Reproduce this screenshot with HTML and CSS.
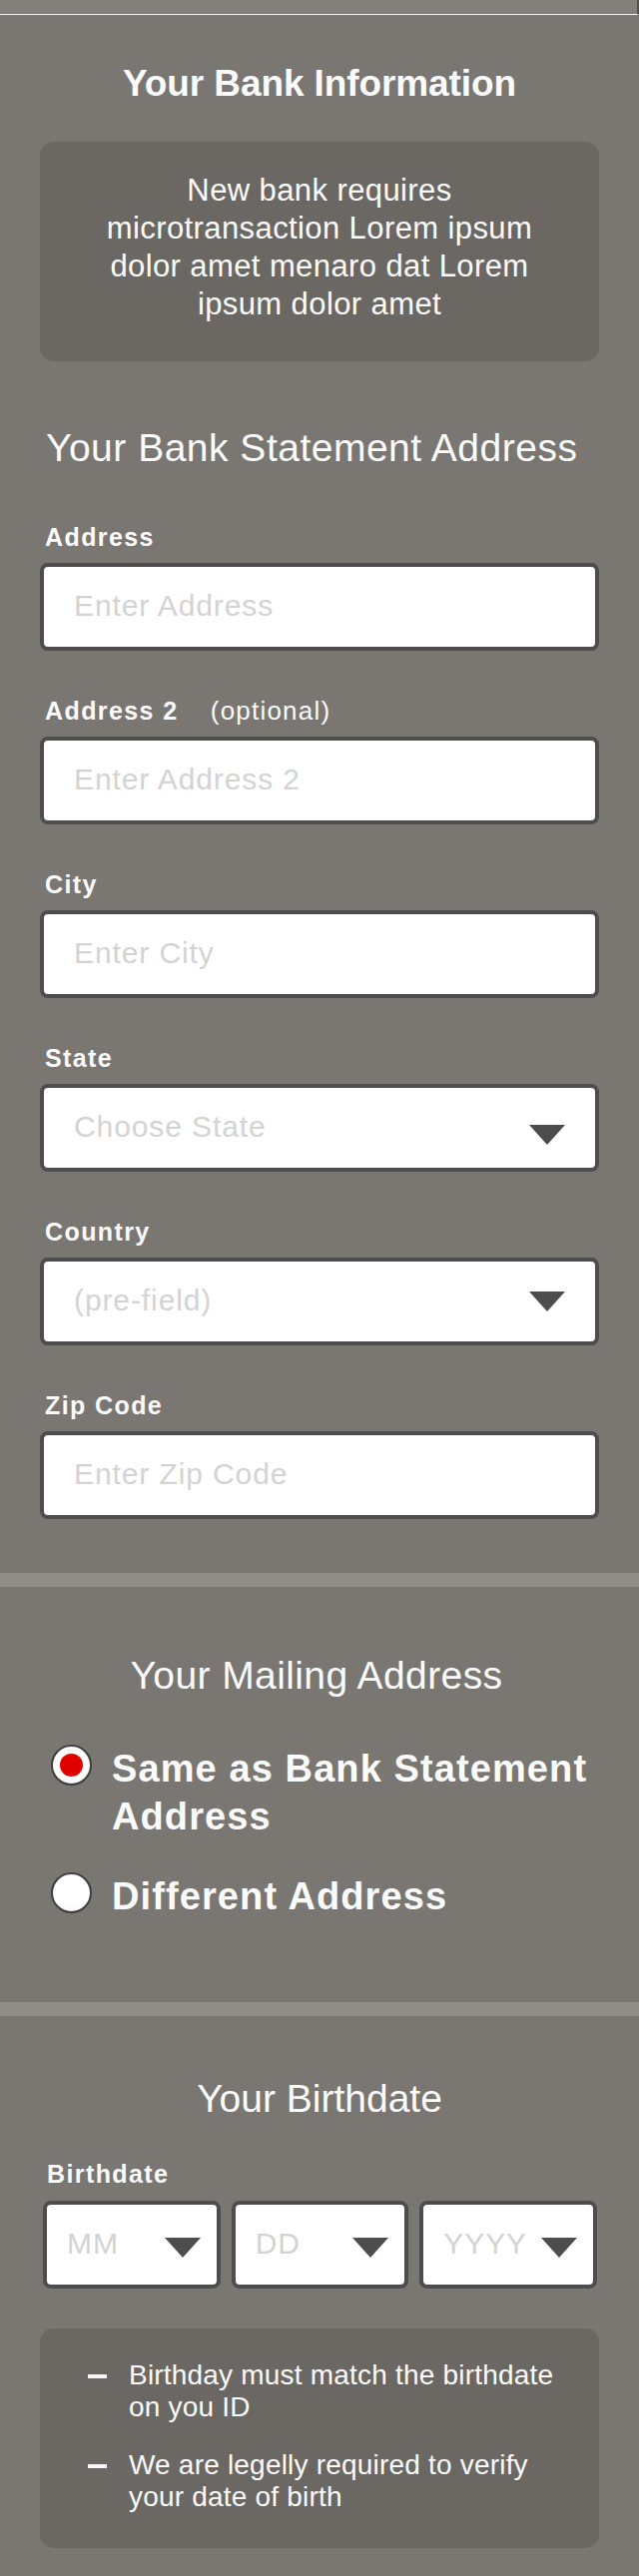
FILE: index.html
```html
<!DOCTYPE html>
<html lang="en">
<head>
<meta charset="utf-8">
<title>Your Bank Information</title>
<link rel="stylesheet" href="styles.css">
</head>
<body>
<div class="topbar"></div>

<section class="sec sec-bank">
  <h1 class="title-bold">Your Bank Information</h1>
  <div class="note">New bank requires microtransaction Lorem ipsum dolor amet menaro dat Lorem ipsum dolor amet</div>

  <h2 class="title title-statement">Your Bank Statement Address</h2>

  <div class="fields">
    <div class="field">
      <div class="label">Address</div>
      <div class="input"><span class="ph">Enter Address</span></div>
    </div>
    <div class="field">
      <div class="label">Address 2 <span class="opt">(optional)</span></div>
      <div class="input"><span class="ph">Enter Address 2</span></div>
    </div>
    <div class="field">
      <div class="label">City</div>
      <div class="input"><span class="ph">Enter City</span></div>
    </div>
    <div class="field">
      <div class="label">State</div>
      <div class="input select"><span class="ph">Choose State</span><span class="arrow arrow-low"></span></div>
    </div>
    <div class="field">
      <div class="label">Country</div>
      <div class="input select"><span class="ph">(pre-field)</span><span class="arrow"></span></div>
    </div>
    <div class="field">
      <div class="label">Zip Code</div>
      <div class="input"><span class="ph">Enter Zip Code</span></div>
    </div>
  </div>
</section>

<div class="divider"></div>

<section class="sec sec-mail">
  <h2 class="title title-mail">Your Mailing Address</h2>
  <div class="radios">
    <div class="radio-item">
      <span class="radio checked"></span>
      <span class="radio-text">Same as Bank Statement Address</span>
    </div>
    <div class="radio-item">
      <span class="radio"></span>
      <span class="radio-text">Different Address</span>
    </div>
  </div>
</section>

<div class="divider"></div>

<section class="sec sec-birth">
  <h2 class="title">Your Birthdate</h2>
  <div class="label label-birth">Birthdate</div>
  <div class="date-row">
    <div class="input select small"><span class="ph">MM</span><span class="arrow"></span></div>
    <div class="input select small"><span class="ph">DD</span><span class="arrow"></span></div>
    <div class="input select small"><span class="ph">YYYY</span><span class="arrow"></span></div>
  </div>
  <ul class="notes">
    <li><span class="dash"></span><span class="note-text">Birthday must match the birthdate on you ID</span></li>
    <li><span class="dash"></span><span class="note-text">We are legelly required to verify your date of birth</span></li>
  </ul>
</section>
</body>
</html>
```

FILE: styles.css
```css
* {
  box-sizing: border-box;
}

html, body {
  margin: 0;
  padding: 0;
}

body {
  background: #7a7773;
  font-family: "Liberation Sans", Arial, Helvetica, sans-serif;
  color: #fbfbfb;
  width: 640px;
}

.topbar {
  height: 15px;
  background: #837f7b;
  border-bottom: 1px solid #f4f4f4;
  border-right: 2px solid #505050;
}

.sec {
  padding: 0 40px;
}

.sec-bank {
  padding-bottom: 54px;
}

.title-bold {
  margin: 47px 0 0;
  font-size: 37px;
  line-height: 44px;
  font-weight: bold;
  text-align: center;
  letter-spacing: -0.1px;
}

.note {
  margin-top: 36px;
  background: #6b6864;
  border-radius: 14px;
  padding: 30px 40px 38px;
  font-size: 31px;
  line-height: 38px;
  letter-spacing: 0.4px;
  text-align: center;
}

.title {
  margin: 0;
  font-size: 39px;
  line-height: 46px;
  font-weight: normal;
  text-align: center;
}

.title-statement {
  margin-top: 64px;
  text-align: left;
  padding-left: 6px;
  letter-spacing: 0.5px;
  white-space: nowrap;
}

.title-mail {
  letter-spacing: 0.4px;
  padding-right: 6px;
}

.fields {
  margin-top: 51px;
  display: flex;
  flex-direction: column;
  gap: 45px;
}

.label {
  font-size: 25px;
  line-height: 30px;
  font-weight: bold;
  letter-spacing: 1.4px;
  padding-left: 5px;
}

.opt {
  font-weight: normal;
  font-size: 26px;
  letter-spacing: 1.2px;
  margin-left: 24px;
}

.input {
  margin-top: 11px;
  height: 88px;
  background: #ffffff;
  border: 4px solid #4d4d4d;
  border-radius: 8px;
  display: flex;
  align-items: center;
  padding: 0 30px;
}

.ph {
  color: #d3d3d3;
  font-size: 30px;
  line-height: 1;
  letter-spacing: 0.9px;
  padding-bottom: 2px;
  white-space: nowrap;
}

.select {
  justify-content: space-between;
}

.arrow {
  width: 0;
  height: 0;
  border-left: 18px solid transparent;
  border-right: 18px solid transparent;
  border-top: 20px solid #4d4d4d;
  flex: none;
}

.arrow-low {
  margin-top: 14px;
}

.divider {
  height: 14px;
  background: #918d89;
}

.sec-mail {
  padding-top: 66px;
  padding-bottom: 82px;
}

.radios {
  margin-top: 46px;
  display: flex;
  flex-direction: column;
  gap: 32px;
}

.radio-item {
  display: flex;
  align-items: flex-start;
  gap: 20px;
  padding-left: 11px;
}

.radio {
  flex: none;
  width: 41px;
  height: 41px;
  border-radius: 50%;
  border: 2px solid #3e3e3e;
  background: radial-gradient(circle at 50% 40%, #ffffff 60%, #e9e9e9 100%);
  display: flex;
  align-items: center;
  justify-content: center;
}

.radio.checked::after {
  content: "";
  width: 23px;
  height: 23px;
  border-radius: 50%;
  background: #e00000;
}

.radio-text {
  font-size: 38px;
  line-height: 48px;
  font-weight: bold;
  letter-spacing: 1.1px;
}

.sec-birth {
  padding-top: 60px;
  padding-bottom: 28px;
}

.label-birth {
  margin-top: 37px;
  padding-left: 7px;
}

.date-row {
  margin-top: 12px;
  padding: 0 2px 0 3px;
  display: grid;
  grid-template-columns: 1fr 1fr 1fr;
  gap: 11px;
}

.input.small {
  margin-top: 0;
  padding: 0 16px 0 20px;
}

.input.small .arrow {
  margin-top: 6px;
}

.notes {
  list-style: none;
  margin: 40px 0 0;
  background: #6b6864;
  border-radius: 14px;
  padding: 31px 30px 35px 48px;
  display: flex;
  flex-direction: column;
  gap: 26px;
}

.notes li {
  display: flex;
  align-items: flex-start;
  gap: 22px;
}

.dash {
  flex: none;
  width: 19px;
  height: 4px;
  background: #f6f6f6;
  margin-top: 15px;
}

.note-text {
  font-size: 28px;
  line-height: 32px;
  letter-spacing: 0.2px;
}
```
